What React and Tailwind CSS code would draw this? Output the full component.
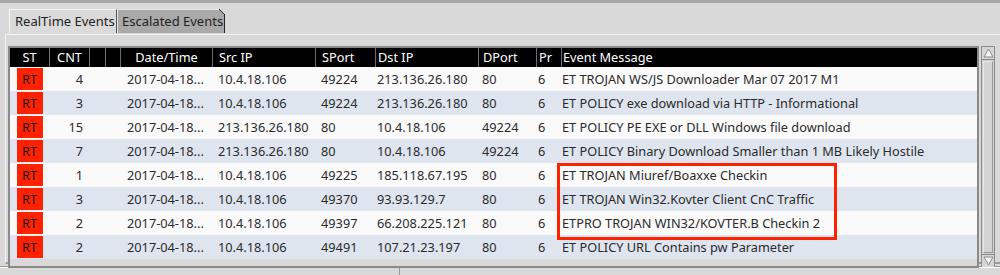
const cols = [
  { label: 'ST', w: 'w-[39px]', head: 'justify-center', cell: 'justify-center' },
  { label: 'CNT', w: 'w-[40px]', head: 'justify-center', cell: 'justify-end pr-[6px]' },
  { label: '', w: 'w-[16px]', head: '', cell: '' },
  { label: '', w: 'w-[15px]', head: '', cell: '' },
  { label: 'Date/Time', w: 'w-[92px]', head: 'justify-center', cell: 'pl-[7px]' },
  { label: 'Src IP', w: 'w-[103px]', head: 'pl-[6px]', cell: 'pl-[6px]' },
  { label: 'SPort', w: 'w-[60px]', head: 'pl-[6px]', cell: 'pl-[6px]' },
  { label: 'Dst IP', w: 'w-[103px]', head: 'pl-[2px]', cell: 'pl-[2px]' },
  { label: 'DPort', w: 'w-[58px]', head: 'pl-[4px]', cell: 'pl-[4px]' },
  { label: 'Pr', w: 'w-[25px]', head: 'pl-[2px]', cell: 'pl-[2px]' },
  { label: 'Event Message', w: 'flex-1', head: 'pl-[1px]', cell: 'pl-[1px]' },
]

const rows = [
  ['4', '10.4.18.106', '49224', '213.136.26.180', '80', 'ET TROJAN WS/JS Downloader Mar 07 2017 M1'],
  ['3', '10.4.18.106', '49224', '213.136.26.180', '80', 'ET POLICY exe download via HTTP - Informational'],
  ['15', '213.136.26.180', '80', '10.4.18.106', '49224', 'ET POLICY PE EXE or DLL Windows file download'],
  ['7', '213.136.26.180', '80', '10.4.18.106', '49224', 'ET POLICY Binary Download Smaller than 1 MB Likely Hostile'],
  ['1', '10.4.18.106', '49225', '185.118.67.195', '80', 'ET TROJAN Miuref/Boaxxe Checkin'],
  ['3', '10.4.18.106', '49370', '93.93.129.7', '80', 'ET TROJAN Win32.Kovter Client CnC Traffic'],
  ['2', '10.4.18.106', '49397', '66.208.225.121', '80', 'ETPRO TROJAN WIN32/KOVTER.B Checkin 2'],
  ['2', '10.4.18.106', '49491', '107.21.23.197', '80', 'ET POLICY URL Contains pw Parameter'],
]

function Row({ r, i }) {
  const [cnt, src, sport, dst, dport, msg] = r
  const values = [null, cnt, '', '', '2017-04-18...', src, sport, dst, dport, '6', msg]
  return (
    <div className={`flex h-[24px] ${i % 2 ? 'bg-[#dee5ef]' : 'bg-[#fafafa]'}`}>
      {cols.map((c, k) => (
        <div key={k} className={`${c.w} shrink-0 flex items-center whitespace-nowrap ${c.cell}`}>
          {k === 0 ? (
            <span className="w-[26px] h-[22px] bg-[#ff2200] text-[#1a1a1a] flex items-center justify-center">RT</span>
          ) : (
            values[k]
          )}
        </div>
      ))}
    </div>
  )
}

function ScrollBar() {
  return (
    <div className="w-[14px] ml-[2px] h-[222px] flex flex-col border border-[#8c8c8c] bg-[#cfcfcf]">
      <div className="h-[13px] border-b border-[#8c8c8c] bg-[#d6d6d6] flex items-center justify-center">
        <svg width="11" height="10" viewBox="0 0 11 10">
          <path d="M5.5 1 L10 9 L1 9 Z" fill="#f4f4f4" stroke="#8a8a8a" strokeWidth="1" />
        </svg>
      </div>
      <div className="flex-1 m-[1px] border border-[#e8e8e8] border-r-[#9a9a9a] border-b-[#9a9a9a] bg-[#d4d4d4]" />
      <div className="h-[13px] border-t border-[#8c8c8c] bg-[#d6d6d6] flex items-center justify-center">
        <svg width="11" height="10" viewBox="0 0 11 10">
          <path d="M5.5 9 L10 1 L1 1 Z" fill="#f4f4f4" stroke="#8a8a8a" strokeWidth="1" />
        </svg>
      </div>
    </div>
  )
}

export default function App() {
  return (
    <div className="w-[1000px] h-[275px] overflow-hidden bg-[#d9d9d9] text-[12.75px] text-[#2b2b2b] font-['Noto_Sans',sans-serif] leading-none">
      <div className="h-[3px] bg-[#a7a7a7]" />

      <div className="flex pl-[9px] pt-[6px] h-[31px] text-[13px]">
        <div className="w-[108px] h-[24px] bg-[#dadada] border-t border-l border-[#f6f6f6] border-r border-r-[#555] flex items-center pl-[5px] text-[#222]">
          RealTime Events
        </div>
        <div className="relative w-[108px] h-[24px] bg-[#a9a9a9] border-t border-l border-[#e6e6e6] border-r border-r-[#222] flex items-center pl-[4px] text-[#222]">
          Escalated Events
          <svg className="absolute -right-[1px] -top-[1px]" width="6" height="6" viewBox="0 0 6 6">
            <path d="M0 0 L6 0 L6 6 Z" fill="#d9d9d9" />
            <path d="M0 0 L6 6" stroke="#222" strokeWidth="1" />
          </svg>
        </div>
      </div>

      <div className="ml-[5px] h-[230px] border-t border-l border-[#f4f4f4] border-b-2 border-b-[#9d9d9d] pt-[11px] pl-[2px]">
        <div className="flex">
          <div className="relative w-[971px] border-2 border-[#8a8a8a] bg-[#d9d9d9]">
            <div className="flex h-[19px] bg-black text-white">
              {cols.map((c, k) => (
                <div
                  key={k}
                  className={`${c.w} shrink-0 flex items-center whitespace-nowrap ${k ? 'border-l border-[#6e6e6e]' : ''} ${c.head}`}
                >
                  {c.label}
                </div>
              ))}
            </div>
            {rows.map((r, i) => (
              <Row key={i} r={r} i={i} />
            ))}
            <div className="absolute left-[547px] top-[115px] w-[280px] h-[77px] border-[3px] border-[#ff2200]" />
          </div>
          <ScrollBar />
        </div>
      </div>

      <div className="mt-[2px] border-t border-[#9a9a9a] flex h-[10px]">
        <div className="w-[400px] border-t border-white border-r border-r-[#9a9a9a]" />
        <div className="flex-1 border-t border-white" />
      </div>
    </div>
  )
}
